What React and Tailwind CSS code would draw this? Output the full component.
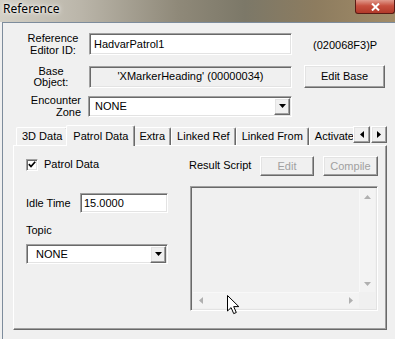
const sunken =
  "border border-t-[#a0a0a0] border-l-[#a0a0a0] border-b-white border-r-white shadow-[inset_1px_1px_0_#696969,inset_-1px_-1px_0_#e3e3e3]";
const raised =
  "border border-t-white border-l-white border-b-[#696969] border-r-[#696969] shadow-[inset_-1px_-1px_0_#a0a0a0,inset_1px_1px_0_#e3e3e3]";

const DropArrow = ({ className = "" }) => (
  <div className={`w-[16px] h-[17px] bg-[#f0f0f0] flex items-center justify-center ${raised} ${className}`}>
    <svg width="7" height="4" viewBox="0 0 7 4">
      <path d="M0 0h7L3.5 4z" fill="#000" />
    </svg>
  </div>
);

const Tab = ({ label, active }) => (
  <div
    className={`flex items-center justify-center border-t border-l border-t-white border-l-white border-r border-r-[#696969] rounded-t-[2px] shadow-[inset_-1px_0_0_#a0a0a0] bg-[#f0f0f0] ${
      active ? "h-[21px] px-[6px] -mx-[2px] z-10 relative" : "h-[18px] px-[5px] mb-[1px]"
    }`}
  >
    <span className="whitespace-nowrap leading-none">{label}</span>
  </div>
);

export default function App() {
  return (
    <div
      className="relative w-[395px] h-[339px] overflow-hidden bg-[#f0f0f0] text-[11px] text-black"
      style={{ fontFamily: '"Liberation Sans", Arial, sans-serif' }}
    >
      {/* title bar */}
      <div className="h-[22px] flex items-start justify-between bg-[linear-gradient(90deg,#d3d0c6_0%,#bbb6aa_20%,#8f8979_45%,#7c7868_62%,#8d7c5f_80%,#a28c68_100%)]">
        <span
          className="ml-[3px] mt-[2px] text-[12px] leading-[14px] text-black [text-shadow:0_0_6px_#fff,0_0_3px_#fff]"
          style={{ fontFamily: '"Noto Sans", "Liberation Sans", sans-serif' }}
        >
          Reference
        </span>
        <div className="w-[40px] h-[14px] rounded-b-[3px] border border-t-0 border-[#5a1a14] bg-[linear-gradient(180deg,#e09a8c_0%,#c7503f_45%,#b23a2a_100%)] flex items-center justify-center">
          <svg width="9" height="8" viewBox="0 0 9 8">
            <path d="M1 0.5l7 7M8 0.5l-7 7" stroke="#fff" strokeWidth="2" />
          </svg>
        </div>
      </div>

      {/* client area */}
      <div className="ml-[2px] h-[317px] border-l border-t border-[#7d8c9c] flex flex-col">
        {/* row 1 */}
        <div className="flex items-center mt-[10px] h-[22px]">
          <div className="ml-[17px] w-[66px] mr-[3px] text-center leading-[12px]">
            Reference
            <br />
            Editor ID:
          </div>
          <div className={`w-[203px] h-[22px] bg-white flex items-center pl-[4px] ${sunken}`}>HadvarPatrol1</div>
          <span className="ml-[21px] mt-[3px]">(020068F3)P</span>
        </div>

        {/* row 2 */}
        <div className="flex items-center mt-[10px] h-[23px]">
          <div className="ml-[14px] w-[68px] mr-[4px] text-center leading-[11px]">
            Base
            <br />
            Object:
          </div>
          <div className={`w-[203px] h-[22px] bg-[#f0f0f0] flex items-center justify-center ${sunken}`}>
            'XMarkerHeading' (00000034)
          </div>
          <div className={`ml-[12px] w-[81px] h-[23px] flex items-center justify-center ${raised}`}>Edit Base</div>
        </div>

        {/* row 3 */}
        <div className="flex items-center mt-[6px] h-[24px]">
          <div className="w-[78px] mr-[7px] text-right leading-[12px]">
            Encounter
            <br />
            Zone
          </div>
          <div className={`w-[204px] h-[21px] bg-white flex items-center justify-between pl-[6px] pr-[1px] ${sunken}`}>
            <span>NONE</span>
            <DropArrow />
          </div>
        </div>

        {/* tabs */}
        <div className="flex items-end ml-[10px] mt-[7px] h-[21px] relative z-10">
          <div className="flex items-end w-[340px] h-[21px] overflow-hidden pl-[3px]">
            <Tab label="3D Data" />
            <Tab label="Patrol Data" active />
            <Tab label="Extra" />
            <Tab label="Linked Ref" />
            <Tab label="Linked From" />
            <Tab label="Activate" />
          </div>
          <div className="flex gap-[1px] self-start mt-[1px]">
            <div className={`w-[17px] h-[17px] flex items-center justify-center ${raised}`}>
              <svg width="4" height="7" viewBox="0 0 4 7">
                <path d="M4 0v7L0 3.5z" fill="#000" />
              </svg>
            </div>
            <div className={`w-[16px] h-[17px] flex items-center justify-center ${raised}`}>
              <svg width="4" height="7" viewBox="0 0 4 7">
                <path d="M0 0v7l4-3.5z" fill="#000" />
              </svg>
            </div>
          </div>
        </div>

        {/* tab panel */}
        <div className="ml-[10px] -mt-[1px] w-[374px] h-[185px] border-t border-l border-white border-r border-b border-r-[#696969] border-b-[#696969] shadow-[inset_-1px_-1px_0_#a0a0a0] flex">
          {/* left column */}
          <div className="ml-[12px] w-[143px] flex flex-col">
            <div className="flex items-center mt-[12px] h-[13px]">
              <div className={`w-[12px] h-[12px] bg-white flex items-center justify-center ${sunken}`}>
                <svg width="8" height="7" viewBox="0 0 8 7">
                  <path d="M0.8 3.2l2.2 2.3L7.2 0.8" stroke="#000" strokeWidth="1.7" fill="none" />
                </svg>
              </div>
              <span className="ml-[6px]">Patrol Data</span>
            </div>
            <div className="flex items-center mt-[22px] h-[20px]">
              <span className="w-[54px]">Idle Time</span>
              <div className={`w-[88px] h-[20px] bg-white flex items-center pl-[3px] ${sunken}`}>15.0000</div>
            </div>
            <span className="mt-[11px] leading-[13px]">Topic</span>
            <div className={`mt-[7px] w-[142px] h-[20px] bg-white flex items-center justify-between pl-[9px] pr-[1px] ${sunken}`}>
              <span>NONE</span>
              <DropArrow className="h-[16px]" />
            </div>
          </div>

          {/* right column */}
          <div className="ml-[20px] w-[189px] flex flex-col">
            <div className="flex items-center mt-[10px] h-[20px]">
              <span className="w-[71px] -mt-[2px]">Result Script</span>
              <div className={`w-[54px] h-[20px] flex items-center justify-center text-[#a0a0a0] ${raised}`}>Edit</div>
              <div className={`ml-[9px] w-[55px] h-[20px] flex items-center justify-center text-[#a0a0a0] ${raised}`}>
                Compile
              </div>
            </div>
            <div className={`ml-[1px] mt-[10px] w-[188px] h-[125px] bg-[#f0f0f0] flex flex-col ${sunken} p-[2px]`}>
              <div className="flex flex-1">
                <div className="flex-1" />
                <div className="w-[16px] bg-[#f3f3f3] border-l border-[#f8f8f8] flex flex-col items-center justify-between py-[6px]">
                  <svg width="7" height="4" viewBox="0 0 7 4">
                    <path d="M0 4h7L3.5 0z" fill="#b0b0b0" />
                  </svg>
                  <svg width="7" height="4" viewBox="0 0 7 4">
                    <path d="M0 0h7L3.5 4z" fill="#b0b0b0" />
                  </svg>
                </div>
              </div>
              <div className="flex h-[16px]">
                <div className="flex-1 bg-[#f3f3f3] border-t border-[#f8f8f8] flex items-center justify-between px-[6px]">
                  <svg width="4" height="7" viewBox="0 0 4 7">
                    <path d="M4 0v7L0 3.5z" fill="#b0b0b0" />
                  </svg>
                  <svg width="4" height="7" viewBox="0 0 4 7">
                    <path d="M0 0v7l4-3.5z" fill="#b0b0b0" />
                  </svg>
                </div>
                <div className="w-[16px] bg-[#f0f0f0]" />
              </div>
            </div>
          </div>
        </div>
      </div>

      {/* mouse cursor */}
      <svg className="absolute left-[227px] top-[295px]" width="13" height="20" viewBox="0 0 13 20">
        <path
          d="M0.5 0.5v15.5l3.6-3.4 2.6 6 2.6-1.1-2.6-5.9h5.1z"
          fill="#fff"
          stroke="#000"
          strokeWidth="1"
          strokeLinejoin="round"
        />
      </svg>
    </div>
  );
}
